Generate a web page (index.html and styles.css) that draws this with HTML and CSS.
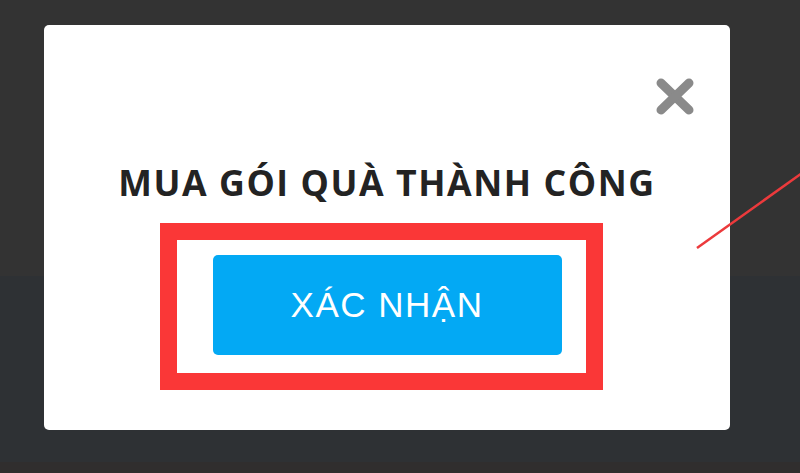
FILE: index.html
```html
<!DOCTYPE html>
<html lang="vi">
<head>
<meta charset="utf-8">
<title>Mua gói quà thành công</title>
<link rel="stylesheet" href="styles.css">
</head>
<body>
<div class="backdrop">
  <div class="modal">
    <button class="close" aria-label="Đóng">
      <svg width="38" height="37" viewBox="0 0 38 37">
        <line x1="5" y1="5" x2="33" y2="32" />
        <line x1="33" y1="5" x2="5" y2="32" />
      </svg>
    </button>
    <h2 class="title">MUA GÓI QUÀ THÀNH CÔNG</h2>
    <button class="confirm">XÁC NHẬN</button>
  </div>
</div>
<div class="highlight"></div>
<svg class="arrow" width="800" height="473" viewBox="0 0 800 473">
  <line x1="697" y1="248" x2="812" y2="166" />
</svg>
</body>
</html>
```
FILE: styles.css
```css
html, body {
  margin: 0;
  padding: 0;
}
body {
  width: 800px;
  height: 473px;
  overflow: hidden;
  position: relative;
  font-family: "Liberation Sans", Arial, sans-serif;
}
.backdrop {
  height: 473px;
  padding: 25px 0 0 44px;
  box-sizing: border-box;
  background: linear-gradient(#333333 0, #333333 276px, #2e3134 276px, #2e3134 462px, #302e2e 462px);
}
.modal {
  width: 686px;
  height: 405px;
  background: #ffffff;
  border-radius: 5px;
  display: flex;
  flex-direction: column;
  align-items: center;
  box-sizing: border-box;
}
.close {
  align-self: flex-end;
  margin: 53px 36px 0 0;
  padding: 0;
  border: 0;
  background: none;
  width: 38px;
  height: 37px;
  display: block;
}
.close svg {
  display: block;
}
.close line {
  stroke: #8a8a8a;
  stroke-width: 9;
  stroke-linecap: round;
}
.title {
  margin: 50px 0 0 0;
  height: 36px;
  font-family: "Open Sans", "Liberation Sans", sans-serif;
  font-size: 35.7px;
  line-height: 1;
  font-weight: 700;
  color: #232323;
  letter-spacing: 1.55px;
  white-space: nowrap;
}
.confirm {
  margin-top: 54px;
  width: 349px;
  height: 100px;
  border: 0;
  border-radius: 5px;
  background: #03a9f4;
  color: #ffffff;
  font-family: "Liberation Sans", Arial, sans-serif;
  font-size: 35px;
  font-weight: 400;
  letter-spacing: 1.5px;
  padding: 0;
}
.highlight {
  position: absolute;
  left: 160px;
  top: 223px;
  width: 443px;
  height: 167px;
  border: 17px solid #fa3737;
  box-sizing: border-box;
  pointer-events: none;
}
.arrow {
  position: absolute;
  left: 0;
  top: 0;
  pointer-events: none;
}
.arrow line {
  stroke: #ec3a3c;
  stroke-width: 2.5;
}
```
